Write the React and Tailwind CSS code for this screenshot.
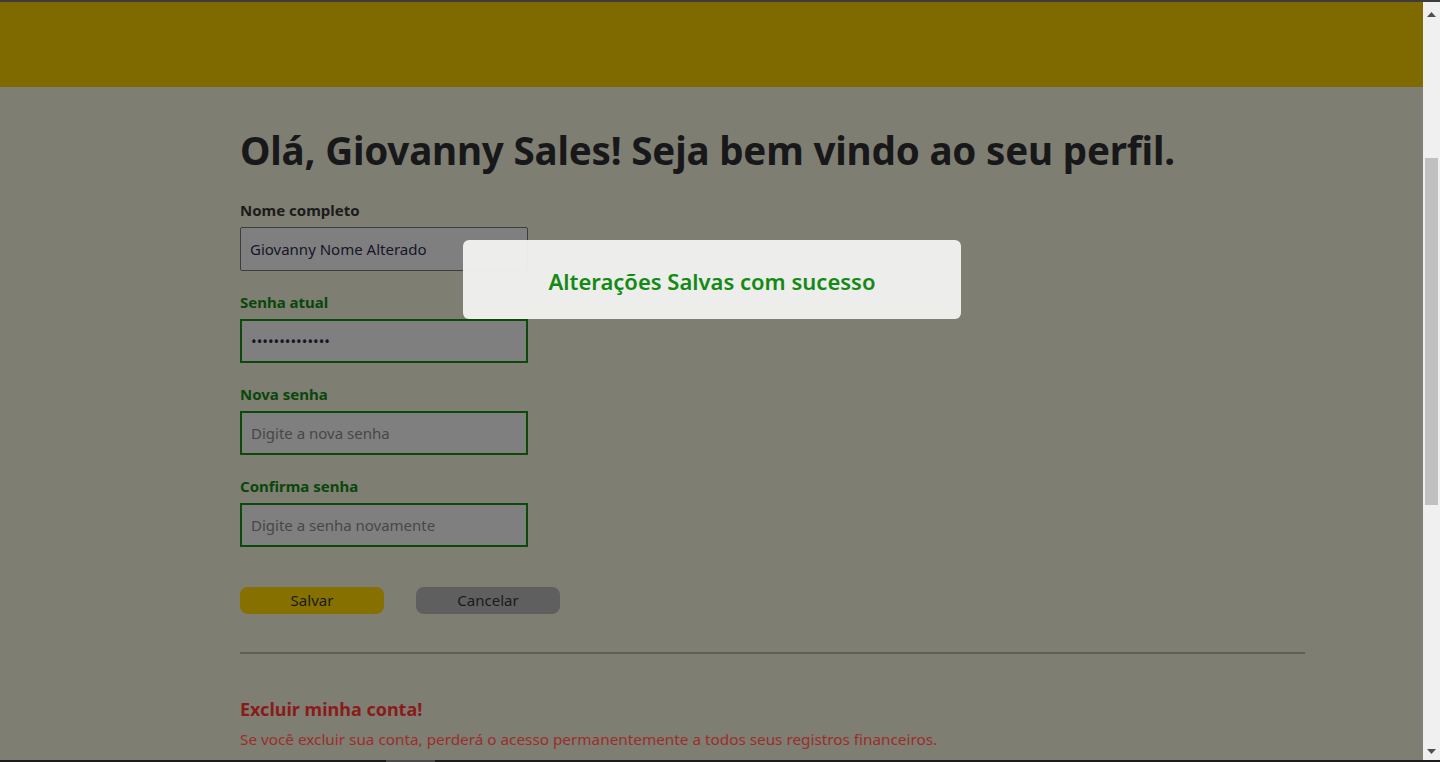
import React from 'react';

const font = { fontFamily: '"Noto Sans", "Open Sans", sans-serif' };

const Field = ({ label, value, placeholder, type = 'text', green }) => (
  <div className="mb-[21px]">
    <label
      className={`block text-[15px] font-bold leading-[20px] mb-[7px] ${green ? 'text-[#0a470a]' : 'text-[#1b1b1b]'}`}
    >
      {label}
    </label>
    <input
      type={type}
      defaultValue={value}
      placeholder={placeholder}
      readOnly
      className={`block w-[288px] h-[44px] px-[9px] bg-[#7f7f7f] text-[15px] text-[#15152a] placeholder:text-[#474747] outline-none ${
        green ? 'border-2 border-[#0b4a0b]' : 'border border-[#3d3d3d] rounded-[2px]'
      }`}
      style={font}
    />
  </div>
);

export default function App() {
  return (
    <div className="h-screen w-full overflow-hidden flex flex-col bg-[#1c1c1c]" style={font}>
      <div className="h-[2px] bg-[#3c3c3e] shrink-0" />
      <div className="flex flex-1 min-h-0">
        <main className="relative flex-1 bg-[#7e7e72] overflow-hidden">
          <header className="h-[85px] bg-[#7f6a00]" />
          <div className="ml-[240px] w-[1065px] pt-[38px]">
            <h1 className="text-[38.6px] font-bold leading-[50px] text-[#18181a] tracking-[-0.2px]">
              Olá, Giovanny Sales! Seja bem vindo ao seu perfil.
            </h1>
            <form className="mt-[25px]">
              <Field label="Nome completo" value="Giovanny Nome Alterado" />
              <Field label="Senha atual" type="password" value="12345678901234" green />
              <Field label="Nova senha" type="password" placeholder="Digite a nova senha" green />
              <Field label="Confirma senha" type="password" placeholder="Digite a senha novamente" green />
              <div className="flex gap-[32px] mt-[40px]">
                <button
                  type="button"
                  className="w-[144px] h-[27px] rounded-[8px] bg-[#857000] text-[15px] text-[#1a1a1a]"
                >
                  Salvar
                </button>
                <button
                  type="button"
                  className="w-[144px] h-[27px] rounded-[8px] bg-[#5f5f5f] text-[15px] text-[#1a1a1a]"
                >
                  Cancelar
                </button>
              </div>
            </form>
            <hr className="mt-[38px] border-0 h-[2px] bg-[#5f5f55]" />
            <section className="mt-[43px]">
              <h2 className="text-[18px] font-bold leading-[24px] text-[#8a1b1b]">Excluir minha conta!</h2>
              <p className="mt-[8px] text-[15.3px] leading-[20px] text-[#9c2d2d]">
                Se você excluir sua conta, perderá o acesso permanentemente a todos seus registros financeiros.
              </p>
            </section>
          </div>
          <div className="absolute left-[463px] top-[238px] w-[498px] h-[79px] rounded-[6px] bg-[#f3f3f2]/95 flex items-center justify-center">
            <span className="mt-[4px] text-[22px] font-semibold text-[#138a13]">Alterações Salvas com sucesso</span>
          </div>
        </main>
        <div className="w-[17px] bg-[#f0f0f0] flex flex-col items-center shrink-0">
          <svg width="9" height="5" viewBox="0 0 9 5" className="mt-[10px]">
            <path d="M0 5 L4.5 0 L9 5 Z" fill="#505050" />
          </svg>
          <div className="mt-[141px] w-[13px] h-[347px] bg-[#c0c0c0]" />
          <div className="flex-1" />
          <svg width="9" height="5" viewBox="0 0 9 5" className="mb-[6px]">
            <path d="M0 0 L9 0 L4.5 5 Z" fill="#505050" />
          </svg>
        </div>
      </div>
      <div className="h-[2px] bg-[#1c1c1c] shrink-0 flex">
        <div className="ml-[386px] w-[49px] bg-[#4a4a4a]" />
      </div>
    </div>
  );
}
